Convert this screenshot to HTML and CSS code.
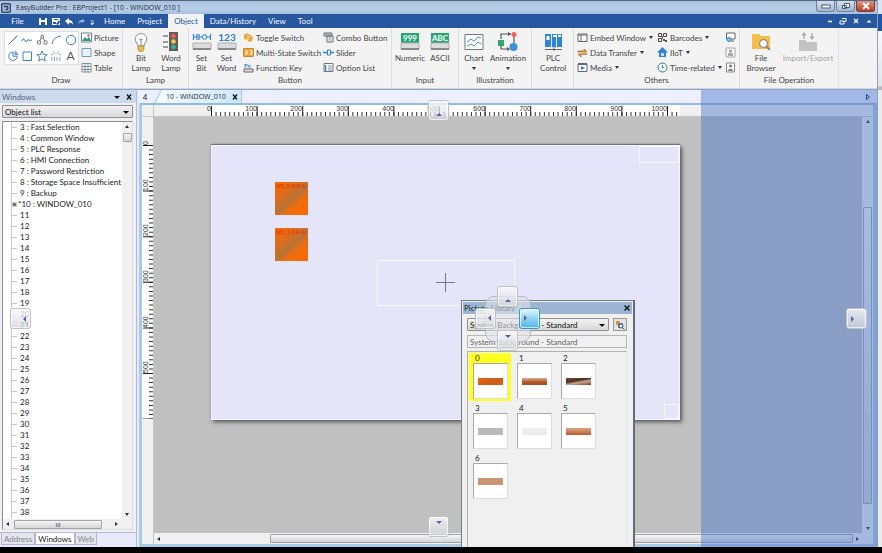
FILE: index.html
```html
<!DOCTYPE html>
<html lang="en">
<head>
<meta charset="utf-8">
<title>EasyBuilder Pro</title>
<link rel="stylesheet" href="styles.css">
</head>
<body>
<div class="desktop">
<div class="app">
  <header class="titlebar">
    <svg class="app-logo" width="12" height="12" viewBox="0 0 12 12"><rect x="1" y="1" width="10" height="10" rx="2" fill="#2c4478"/><path d="M3 3h6v6H3z" fill="none" stroke="#dce6f4"/><path d="M3 6h4M5 9V6" stroke="#dce6f4"/></svg>
    <span class="title">EasyBuilder Pro : EBProject1 - [10 - WINDOW_010 ]</span>
    <div class="win-buttons">
      <button aria-label="Minimize"><svg width="10" height="6"><rect x="1" y="2" width="8" height="3" fill="#fff" stroke="#4a5b73"/></svg></button>
      <button aria-label="Restore"><svg width="10" height="8"><path d="M3.500 1.500h5v4h-5zM1.500 3.500h4v3h-4z" fill="#fff" stroke="#4a5b73"/></svg></button>
      <button class="close" aria-label="Close"><svg width="10" height="8"><path d="M2 1l6 6M8 1L2 7" stroke="#fff" stroke-width="2"/></svg></button>
    </div>
  </header>

  <nav class="menubar">
    <button class="file">File</button>
    <div class="quick">
      <button aria-label="Save"><svg width="10" height="9"><path d="M1 1h8v7H1z" fill="#fff"/><path d="M3 1h4v2H3zM3 5h4v3H3z" fill="#27579e"/></svg></button>
      <button aria-label="Save as"><svg width="10" height="9"><path d="M1 1h8v7H1z" fill="#fff"/><path d="M3 2h4v1H3zM2 5h3v2H2zM5 7l3-4 1 2-2 3z" fill="#27579e"/></svg></button>
      <button aria-label="Undo"><svg width="10" height="9"><path d="M1 4l4-3v2q4 0 4 5q-1-3-4-2v2z" fill="#fff"/></svg></button>
      <button aria-label="Redo"><svg width="10" height="9"><path d="M8 4L5 2v1q-3 0-4 4q1-2 4-2v1z" fill="#9db7dc"/></svg></button>
      <button aria-label="More"><svg width="5" height="9"><path d="M0 4h4M1 6h3L2 8z" stroke="#dce6f6" fill="#dce6f6" stroke-width=".7"/></svg></button>
    </div>
    <button class="tab">Home</button>
    <button class="tab">Project</button>
    <button class="tab active">Object</button>
    <button class="tab">Data/History</button>
    <button class="tab">View</button>
    <button class="tab">Tool</button>
    <div class="mdi">
      <button aria-label="Minimize window"><svg width="8" height="8"><path d="M2 4.500h4" stroke="#fff" stroke-width="1.500"/></svg></button>
      <button aria-label="Restore window"><svg width="8" height="8"><path d="M3 1.500h4v3H5.500M1 4h4v3H1z" stroke="#fff" fill="none"/></svg></button>
      <button aria-label="Close window"><svg width="8" height="8"><path d="M2 2l4 4M6 2L2 6" stroke="#fff" stroke-width="1.300"/></svg></button>
      <button aria-label="Collapse ribbon"><svg width="8" height="8"><path d="M1.500 5.500h5L4 3z" fill="#fff"/></svg></button>
    </div>
  </nav>

  <section class="ribbon">
    <div class="group draw">
      <div class="tools">
        <div class="palette">
          <button aria-label="Line"><svg width="12" height="12"><path d="M1.500 10.500l9-9" stroke="#3f6fae" fill="none"/></svg></button>
          <button aria-label="Freehand"><svg width="12" height="12"><path d="M1 7q1-4 2.500-1T6 7t2-1 3 0" stroke="#3f6fae" fill="none"/></svg></button>
          <button aria-label="Polyline"><svg width="12" height="12"><path d="M3 8l3-5 4 5" stroke="#667" fill="none"/><path d="M1.500 7h3v3h-3zM5 1.500h2.500V4H5zM8 7h3v3H8z" stroke="#667" fill="#fff" stroke-width=".8"/></svg></button>
          <button aria-label="Arc"><svg width="12" height="12"><path d="M2 10q1-7 9-8" stroke="#3f7fc0" fill="none"/></svg></button>
          <button aria-label="Ellipse"><svg width="12" height="12"><circle cx="6" cy="6" r="4.700" stroke="#3f7fc0" fill="none"/></svg></button>
          <button aria-label="Pie"><svg width="12" height="12"><path d="M6 2a4.200 4.200 0 1 0 4.200 4.200H6zM8 4.500h2.500A3 3 0 0 0 8 1.700z" stroke="#3f7fc0" fill="none"/></svg></button>
          <button aria-label="Rectangle"><svg width="12" height="12"><path d="M2 2h8.500v8.500H2z" stroke="#3f7fc0" fill="none"/></svg></button>
          <button aria-label="Star"><svg width="12" height="12"><path d="M6 1l1.500 3.500 3.700.3-2.900 2.400 1 3.700L6 9 2.700 10.900l1-3.700L.8 4.800l3.700-.3z" stroke="#3f7fc0" fill="none"/></svg></button>
          <button aria-label="Scale"><svg width="12" height="12"><path d="M2 11V7M4.500 11V7M7 11V7M10 11V7M1 4l2 1M3.500 1.500L5 4M8.500 1.500L7 4M11 4L9 5" stroke="#8d9fb5" fill="none"/></svg></button>
          <button class="letter" aria-label="Text">A</button>
        </div>
        <div class="stack">
          <button class="small"><svg width="11" height="11"><path d="M.5 1h10v9H.5z" fill="#fff" stroke="#6f8799"/><path d="M1 9l3-4 2 2 2-2 2 4z" fill="#2f9d72"/><circle cx="7.500" cy="3.500" r="1.200" fill="#e8603c"/></svg>Picture</button>
          <button class="small"><svg width="11" height="11"><path d="M1 1.500h9v8H1z" fill="#e7f3f8" stroke="#6f9fb4"/></svg>Shape</button>
          <button class="small"><svg width="11" height="11"><path d="M1 1.500h9v8.500H1zM4 1v9M7 1v9M1 4.500h9M1 7.500h9" fill="#fff" stroke="#667a8c" stroke-width=".8"/></svg>Table</button>
        </div>
      </div>
      <div class="caption">Draw</div>
    </div>

    <div class="group lamp">
      <div class="tools">
        <button class="big"><svg width="20" height="20"><path d="M7 14q0-2-2-4a5.700 5.700 0 1 1 10 0q-2 2-2 4z" fill="#fff" stroke="#888"/><path d="M8 7l2 1 2-1M10 8v6" stroke="#666" fill="none" stroke-width=".8"/><path d="M7 14h6v4l-1.500 1.500h-3L7 18z" fill="#e9bd55" stroke="#9a834f" stroke-width=".7"/></svg>Bit<br>Lamp</button>
        <button class="big"><svg width="20" height="20"><path d="M2 4h5M2 10h5M2 15h5" stroke="#444"/><path d="M8 0h9v19H8z" fill="#5d5d60"/><circle cx="12.500" cy="4" r="2.300" fill="#f2604a"/><circle cx="12.500" cy="9.500" r="2.300" fill="#f5c64b"/><circle cx="12.500" cy="15" r="2.300" fill="#38b88a"/></svg>Word<br>Lamp</button>
      </div>
      <div class="caption">Lamp</div>
    </div>

    <div class="group button-group">
      <div class="tools">
        <button class="big slim"><svg width="20" height="20"><path d="M1.500 2v6M1 5h4M5 2v6M7 2v6M7 5h3M15 5h3M18.500 2v6" stroke="#2f80d0" fill="none" stroke-width="1.200"/><circle cx="12.500" cy="5" r="2.300" fill="none" stroke="#2f80d0"/><path d="M1 11h18v6H1z" fill="#dcdcdc" stroke="#b0b0b0"/><path d="M1 16h18v2H1z" fill="#888"/></svg>Set<br>Bit</button>
        <button class="big slim"><svg width="20" height="20"><text x="10" y="9" text-anchor="middle" class="num123">123</text><path d="M1 11h18v6H1z" fill="#dcdcdc" stroke="#b0b0b0"/><path d="M1 16h18v2H1z" fill="#888"/></svg>Set<br>Word</button>
        <div class="stack switches">
          <button class="small"><svg width="11" height="11"><path d="M1 3l3-2 3 2 3 2-1 4-3 1-2-2-3-1z" fill="#eaa637"/><path d="M4 3l3 3M3 6l3 2" stroke="#fff1cf"/></svg>Toggle Switch</button>
          <button class="small"><svg width="11" height="11"><path d="M.5 1.500h10v8H.5z" fill="#eaa637" stroke="#c98a2b"/><path d="M2 4h2v3H2M7 4h2v3H7" stroke="#fff" fill="none"/></svg>Multi-State Switch</button>
          <button class="small"><svg width="11" height="11"><text x="1" y="6" class="fn">Fn</text><path d="M1 7h9v3H1z" fill="#ddd" stroke="#666"/></svg>Function Key</button>
        </div>
        <div class="stack">
          <button class="small"><svg width="11" height="11"><path d="M1 1h8v3H1zM4 4h6v6H4z" fill="#fff" stroke="#666"/><path d="M1 1h8v2H1z" fill="#8aa4be"/><path d="M5.500 6h3M5.500 8h3" stroke="#788"/></svg>Combo Button</button>
          <button class="small"><svg width="11" height="11"><path d="M0 5.500h4M8 5.500h3" stroke="#2f80d0" stroke-width="1.500"/><path d="M4.500 3h3v5h-3z" fill="#fff" stroke="#2f80d0"/></svg>Slider</button>
          <button class="small"><svg width="11" height="11"><path d="M1 1.500h9v8H1z" fill="#fff" stroke="#678"/><path d="M2.500 3v6" stroke="#4c83bd" stroke-width="1.500"/><path d="M5 4h4M5 6h4M5 8h4" stroke="#678" stroke-width=".8"/></svg>Option List</button>
        </div>
      </div>
      <div class="caption">Button</div>
    </div>

    <div class="group input-group">
      <div class="tools">
        <button class="big"><svg width="20" height="20"><path d="M1 1h18v10H1z" fill="#29a673"/><text x="10" y="9" text-anchor="middle" class="tag">999</text><path d="M1 11h18v6H1z" fill="#dcdcdc" stroke="#b0b0b0"/><path d="M1 16h18v2H1z" fill="#888"/></svg>Numeric</button>
        <button class="big"><svg width="20" height="20"><path d="M1 1h18v10H1z" fill="#29a673"/><text x="10" y="9" text-anchor="middle" class="tag">ABC</text><path d="M1 11h18v6H1z" fill="#dcdcdc" stroke="#b0b0b0"/><path d="M1 16h18v2H1z" fill="#888"/></svg>ASCII</button>
      </div>
      <div class="caption">Input</div>
    </div>

    <div class="group illus">
      <div class="tools">
        <button class="big"><svg width="20" height="20"><path d="M1 2.500h18v15H1z" fill="#fff" stroke="#777"/><path d="M3 10l4-3 3 2 4-4 3 1" stroke="#4d8ecb" fill="none"/><path d="M3 14l4-2 3 2 4-4 3 2" stroke="#4aa787" fill="none"/></svg>Chart<i class="drop"></i></button>
        <button class="big wide"><svg width="20" height="20"><path d="M3 7V2h10M16 5v6M3 13v4h8" stroke="#555" fill="none" stroke-width="1.200"/><path d="M10 0l3 2-3 2zM9 15l3 2-3 2z" fill="#555"/><path d="M0 8h6v6H0z" fill="#31a66f"/><circle cx="16" cy="2.500" r="2.500" fill="#ee6550"/><circle cx="15.500" cy="15" r="4" fill="#3d8edb"/></svg>Animation<i class="drop"></i></button>
      </div>
      <div class="caption">Illustration</div>
    </div>

    <div class="group plc">
      <div class="tools">
        <button class="big wide"><svg width="20" height="20"><path d="M2 2h17v13H2z" fill="#2f84d4"/><path d="M3.500 4h3v4h-3zM10 3h3v2h-3zM15 3h3v2h-3z" fill="#fff"/><path d="M8.500 2v13M13.500 2v13" stroke="#d7e9fa"/><path d="M2 17.500h17M11 15v4" stroke="#666"/></svg>PLC<br>Control</button>
      </div>
    </div>

    <div class="group others">
      <div class="tools">
        <div class="stack embed">
          <button class="small"><svg width="11" height="11"><path d="M1 2h9v7.500H1z" fill="#fff" stroke="#666"/><path d="M1 3h9M4 3v6" stroke="#667"/></svg>Embed Window<i class="drop"></i></button>
          <button class="small"><svg width="11" height="11"><path d="M1 4h6V2l3 3H1zM10 7H4v3L1 7z" fill="#e79a45" stroke="#b97022" stroke-width=".8"/></svg>Data Transfer<i class="drop"></i></button>
          <button class="small"><svg width="11" height="11"><path d="M1 2h9v7.500H1z" fill="#fff" stroke="#667"/><path d="M1 2h9" stroke="#667" stroke-width="2"/><path d="M4 4l4 2-4 2z" fill="#2f84d4"/></svg>Media<i class="drop"></i></button>
        </div>
        <div class="stack codes">
          <button class="small"><svg width="11" height="11"><path d="M1.500 1.500h3v3h-3zM6.500 1.500h3v3h-3zM1.500 6.500h3v3h-3z" stroke="#444" fill="none"/><path d="M6 7h2v1h2v2H8V9H6zM5 4h1v3H5z" fill="#555"/></svg>Barcodes<i class="drop"></i></button>
          <button class="small"><svg width="11" height="11"><path d="M0 5.500L5.500 0 11 5.500H9V10H2V5.500z" fill="#2f84d4"/><path d="M4 6h3v3H4z" fill="#c4e1fa"/></svg>IIoT<i class="drop"></i></button>
          <button class="small"><svg width="11" height="11"><circle cx="5.500" cy="5.500" r="4.500" fill="#fff" stroke="#2b7a98"/><path d="M5.500 3v3l2-1" fill="none" stroke="#3b9b74"/></svg>Time-related<i class="drop"></i></button>
        </div>
        <div class="stack">
          <button class="small" aria-label="Remote view"><svg width="11" height="11"><path d="M1.500 1h8.500v6H1.500z" fill="#fff" stroke="#666"/><circle cx="4" cy="7.500" r="2" fill="#8cc2f0" stroke="#2f84d4"/><path d="M6 9h3" stroke="#666"/></svg></button>
          <button class="small" aria-label="Operator"><svg width="11" height="11"><path d="M1 1h9v9H1z" fill="#f5f5f5" stroke="#aaa"/><circle cx="5.500" cy="4" r="1.500" fill="#999"/><path d="M3 9V6h5v3z" fill="#aaa"/></svg></button>
          <button class="small" aria-label="Contacts"><svg width="11" height="11"><path d="M1.500 1h8v9h-8z" fill="#fff" stroke="#888"/><circle cx="5.500" cy="4" r="1.500" fill="#777"/><path d="M3 8q2.500-3 5 0v1H3z" fill="#888"/></svg></button>
        </div>
      </div>
      <div class="caption">Others</div>
    </div>

    <div class="group fileop">
      <div class="tools">
        <button class="big"><svg width="20" height="20"><path d="M1 2h7l2 2h9v13H1z" fill="#f6bd48"/><circle cx="12.500" cy="11.500" r="4" fill="#fff" stroke="#777"/><path d="M15.500 14.500L19 18" stroke="#777" stroke-width="1.500"/></svg>File<br>Browser</button>
        <button class="big import" disabled><svg width="20" height="20"><path d="M1 8h6l2 2h10v9H1z" fill="#c3c3c3"/><path d="M6 7V2M14 1v5" stroke="#aaa" stroke-width="1.300"/><path d="M3.500 3.500h5L6 0zM11.500 4.500h5L14 8z" fill="#aaa"/></svg>Import/Export</button>
      </div>
      <div class="caption">File Operation</div>
    </div>
  </section>

  <main class="work">
    <aside class="panel">
      <div class="panel-head"><span>Windows</span>
        <button aria-label="Panel menu"><svg width="8" height="8"><path d="M1 3h6L4 6z" fill="#111"/></svg></button>
        <button aria-label="Close panel"><svg width="8" height="8"><path d="M2 1.500l4 5M6 1.500l-4 5" stroke="#111" stroke-width="1.300"/></svg></button>
      </div>
      <div class="panel-body">
        <div class="combo"><select aria-label="Panel view"><option>Object list</option></select></div>
        <div class="tree">
          <ul>
            <li>3 : Fast Selection</li><li>4 : Common Window</li><li>5 : PLC Response</li><li>6 : HMI Connection</li><li>7 : Password Restriction</li><li>8 : Storage Space Insufficient</li><li>9 : Backup</li><li class="open">*10 : WINDOW_010</li>
            <li>11</li><li>12</li><li>13</li><li>14</li><li>15</li><li>16</li><li>17</li><li>18</li><li>19</li><li>20</li><li>21</li><li>22</li><li>23</li><li>24</li><li>25</li><li>26</li><li>27</li><li>28</li><li>29</li><li>30</li><li>31</li><li>32</li><li>33</li><li>34</li><li>35</li><li>36</li><li>37</li><li>38</li><li>39</li>
          </ul>
          <div class="vbar"><i class="arrow up"></i><i class="thumb"></i><i class="arrow down"></i></div>
          <div class="hbar"><i class="arrow left"></i><i class="thumb">III</i><i class="arrow right"></i></div>
        </div>
      </div>
      <div class="panel-tabs"><button>Address</button><button class="active">Windows</button><button>Web</button></div>
    </aside>

    <section class="editor">
      <div class="doc-tabs">
        <button class="prev">4</button>
        <div class="doc-tab"><span>10 - WINDOW_010</span><button aria-label="Close tab"><svg width="8" height="8"><path d="M2 1.500l4 5M6 1.500l-4 5" stroke="#111" stroke-width="1.300"/></svg></button></div>
        <button class="next" aria-label="Next tab"><svg width="6" height="8"><path d="M1.500 1.500v5L4.500 4z" fill="none" stroke="#123"/></svg></button>
      </div>
      <div class="frame">
        <div class="corner"></div>
        <div class="hruler">
          <svg width="480" height="12">
            <path d="M7 0h469v12H7z" fill="#fff"/>
            <path d="M7 9h468" stroke="#333" stroke-width="4" stroke-dasharray="1 3.560"/>
            <path d="M7 6h468" stroke="#222" stroke-width="10" stroke-dasharray="1 44.600"/>
            <g text-anchor="end" class="scale"><text x="7" y="6">0</text><text x="53" y="6">100</text><text x="98" y="6">200</text><text x="144" y="6">300</text><text x="190" y="6">400</text><text x="235" y="6">500</text><text x="281" y="6">600</text><text x="327" y="6">700</text><text x="372" y="6">800</text><text x="418" y="6">900</text><text x="463" y="6">1000</text></g>
          </svg>
        </div>
        <div class="vruler">
          <svg width="12" height="280">
            <path d="M0 5h12v275H0z" fill="#fff"/>
            <path d="M9 5v274" stroke="#333" stroke-width="4" stroke-dasharray="1 3.560"/>
            <path d="M6 5v274" stroke="#222" stroke-width="10" stroke-dasharray="1 44.600"/>
            <g class="scale"><text transform="translate(6 5) rotate(-90)">0</text><text transform="translate(6 51) rotate(-90)">100</text><text transform="translate(6 96) rotate(-90)">200</text><text transform="translate(6 142) rotate(-90)">300</text><text transform="translate(6 188) rotate(-90)">400</text><text transform="translate(6 233) rotate(-90)">500</text></g>
          </svg>
        </div>
        <div class="stage">
          <div class="hmi">
            <div class="part first">WC_0 (LW-0)</div>
            <div class="part second">WC_1 (LW-0)</div>
            <div class="outline mid"></div>
            <div class="outline top"></div>
            <div class="outline bottom"></div>
            <svg class="cross" width="19" height="19"><path d="M9.500 0v19M0 9.500h19" stroke="#77778a"/></svg>
          </div>
        </div>
        <div class="vbar"><i class="arrow up"></i><i class="thumb"></i><i class="arrow down"></i></div>
        <div class="hbar"><i class="arrow left"></i><i class="thumb"></i><i class="arrow right"></i></div>
      </div>

      <div class="dialog">
        <div class="dialog-head"><span>Picture Library</span><button aria-label="Close dialog"><svg width="8" height="8"><path d="M1.500 1.500l5 5M6.500 1.500l-5 5" stroke="#111" stroke-width="1.300"/></svg></button></div>
        <div class="pick">
          <div class="combo"><select aria-label="Library"><option>System Background - Standard</option></select></div>
          <button aria-label="Browse library"><svg width="10" height="10"><path d="M1 1h4v4H1z" fill="#ef8c3a"/><path d="M3 3h5v5H3z" fill="#5b8ed0"/><circle cx="6" cy="6" r="2" fill="#fff" stroke="#345"/><path d="M7.500 7.500l2 2" stroke="#345"/></svg></button>
        </div>
        <input type="text" aria-label="Library name" value="System Background - Standard" readonly>
        <div class="gallery">
          <button class="cell selected">0<span class="tile"><i class="bar orange"></i></span></button>
          <button class="cell">1<span class="tile"><i class="bar copper"></i></span></button>
          <button class="cell">2<span class="tile"><i class="bar dark"></i></span></button>
          <button class="cell">3<span class="tile"><i class="bar gray"></i></span></button>
          <button class="cell">4<span class="tile"><i class="bar pale"></i></span></button>
          <button class="cell">5<span class="tile"><i class="bar salmon"></i></span></button>
          <button class="cell">6<span class="tile"><i class="bar tan"></i></span></button>
        </div>
      </div>

      <div class="drop-zone"></div>
      <div class="compass">
        <i class="dock n"></i><i class="dock w"></i><i class="dock e hot"></i><i class="dock s"></i>
      </div>
    </section>

    <div class="edge-docks"><i class="dock n"></i><i class="dock w"></i><i class="dock e"></i><i class="dock s"></i></div>
  </main>
</div>
<div class="behind"><div class="behind-title"></div><div class="behind-ribbon"></div></div>
</div>
</body>
</html>
```
FILE: styles.css
```css
* { box-sizing: border-box; }

body {
  margin: 0;
  height: 100vh;
  padding-bottom: 6px;
  overflow: hidden;
  background: #000;
  font: 8px/10px Lato, "Open Sans", sans-serif;
  color: #444;
}

button {
  border: 0;
  margin: 0;
  padding: 0;
  background: none;
  font: inherit;
  color: inherit;
}

svg { display: block; flex: none; }

.desktop { display: flex; height: 100%; }
.app { flex: 1; min-width: 0; display: flex; flex-direction: column; }
.behind { width: 5px; background: #e9ebee; border-left: 1px solid #8fa0b5; }
.behind-title { height: 14px; background: #d9e5f5; }
.behind-ribbon { height: 76px; background: linear-gradient(#1d56ab 17px, #f6f8fb 17px, #dfe5ed 72px, #b4b8bf 73px); }

/* title and menu */
.titlebar {
  display: flex;
  align-items: center;
  gap: 4px;
  height: 14px;
  padding: 0 2px 0 0;
  border-top: 1px solid #51677f;
  background: linear-gradient(#a9c1de, #b9cfe9 60%, #a6bfdd);
}
.title, .doc-tab { font: 7px/12px "Open Sans", sans-serif; color: #222c3b; white-space: nowrap; }
.win-buttons { display: flex; gap: 1px; margin-left: auto; align-self: flex-start; }
.win-buttons button {
  display: grid;
  place-items: center;
  width: 19px;
  height: 11px;
  border: 1px solid #70839c;
  border-top: 0;
  border-radius: 0 0 3px 3px;
  background: linear-gradient(#d3dfed, #a3b7d0);
}
.win-buttons .close { background: linear-gradient(#dd9583, #c23a22); border-color: #783c38; }

.menubar { display: flex; height: 14px; background: #27579e; color: #f3f7fd; line-height: 13px; }
.file { width: 35px; }
.quick { display: flex; align-items: center; gap: 3px; width: 63px; padding-left: 3px; }
.tab { padding: 0 6px; }
.tab.active { background: #f3f4f6; color: #27579e; }
.mdi { display: flex; align-items: center; gap: 5px; margin-left: auto; padding-right: 4px; }

/* ribbon */
.ribbon {
  display: grid;
  grid-template-columns: 123px 66px 203px 67px 73px 42px 166px 99px;
  height: 61px;
  background: #f3f3f4;
  border-bottom: 1px solid #cfd4dc;
}
.group { display: flex; flex-direction: column; padding-top: 2px; border-right: 1px solid #dedfe2; white-space: nowrap; }
.tools { display: flex; height: 45px; padding-left: 3px; }
.caption { text-align: center; line-height: 10px; }
.palette {
  display: grid;
  grid-template-columns: repeat(5, 14px);
  align-content: space-evenly;
  justify-content: space-evenly;
  width: 75px;
  height: 34px;
  margin: 1px 2px 0 1px;
  border: 1px solid #dadde2;
  background: #fff;
}
.palette button { display: grid; place-items: center; height: 14px; }
.letter { font-size: 12px; color: #555; }
.stack { display: flex; flex-direction: column; }
.small { display: flex; align-items: center; gap: 2px; height: 15px; }
.small .drop { margin-left: 1px; }
.big { display: flex; flex-direction: column; align-items: center; width: 30px; padding-top: 2px; text-align: center; }
.big svg { margin-bottom: 1px; }
.big.slim { width: 25px; }
.big.wide { width: 38px; }
.drop { border: 2px solid transparent; border-top: 3px solid #333; border-bottom: 0; }
.big .drop { margin-top: 4px; }
.button-group .tools, .illus .tools { padding-left: 0; }
.plc .tools { padding-left: 2px; }
.switches { width: 80px; margin-left: 4px; }
.embed { width: 80px; }
.codes { width: 68px; }
.fileop .big { width: 36px; }
.fileop .import { width: 58px; color: #a5a5a8; }
.num123 { font: 700 10px Lato, sans-serif; fill: #2f80d0; }
.fn { font: 700 6px Lato, sans-serif; fill: #2f80d0; }
.tag { font: 700 8px Lato, sans-serif; fill: #fff; }

/* work area */
.work { position: relative; flex: 1; min-height: 0; display: flex; border-top: 1px solid #8ba8cc; background: #e8eafa; }
.panel { display: flex; flex-direction: column; width: 137px; border-right: 1px solid #b3b8dc; }
.panel-head { display: flex; align-items: center; gap: 4px; height: 13px; padding: 0 3px 0 2px; background: #ccdaee; color: #55657c; }
.panel-head span { flex: 1; }
.panel-body { flex: 1; min-height: 0; display: flex; flex-direction: column; gap: 3px; padding: 2px 3px 2px 2px; background: #f0f0f2; border-bottom: 1px solid #b3b8dc; }
.combo { position: relative; flex: 1; }
.combo::after { content: ""; position: absolute; right: 4px; top: 6px; border: 3px solid transparent; border-top-color: #111; border-bottom: 0; pointer-events: none; }
.panel-body .combo { flex: none; }
select {
  display: block;
  appearance: none;
  width: 100%;
  height: 13px;
  padding: 0 2px;
  border: 1px solid #8e9094;
  border-radius: 1px;
  background: linear-gradient(#f2f2f2, #d8d8d8);
  font: inherit;
  color: #111;
}
.tree {
  flex: 1;
  min-height: 0;
  display: grid;
  grid-template: minmax(0, 1fr) 10px / minmax(0, 1fr) 10px;
  border: 1px solid #8a8d92;
  border-right-color: #dedede;
  border-bottom-color: #dedede;
  background: #fff;
}
.tree ul { margin: 0 0 0 8px; padding: 0; overflow: hidden; list-style: none; border-left: 1px solid #c9c9c9; color: #222; }
.tree li { height: 11px; padding-left: 8px; line-height: 11px; white-space: nowrap; background: linear-gradient(#c9c9c9, #c9c9c9) 0 5px / 5px 1px no-repeat; }
.tree .open { padding-left: 6px; background: radial-gradient(#666 1px, #ccc 2px) 0 3px / 5px 5px no-repeat; }

.vbar, .hbar { display: flex; align-items: center; background: #f0f0f1; }
.vbar { flex-direction: column; padding: 3px 0; }
.hbar { padding: 0 3px; }
.arrow { border: 2px solid transparent; }
.arrow.up { border-bottom: 3px solid #333; border-top: 0; }
.arrow.down { border-top: 3px solid #333; border-bottom: 0; margin-top: auto; }
.arrow.left { border-right: 3px solid #333; border-left: 0; }
.arrow.right { border-left: 3px solid #333; border-right: 0; margin-left: auto; }
.thumb { border: 1px solid #a3a5a9; border-radius: 1px; background: linear-gradient(#f6f6f6, #d4d4d6); }
.tree .vbar .thumb { width: 9px; height: 9px; margin-top: 5px; }
.tree .hbar { grid-column: 1 / 3; padding-right: 14px; }
.tree .hbar .thumb { width: 88px; height: 9px; margin-left: 5px; font: 6px/7px Lato, sans-serif; text-align: center; color: #444; }
.panel-tabs { display: flex; height: 14px; padding-left: 1px; }
.panel-tabs button { height: 12px; padding: 0 2px; border: 1px solid #b3b6c6; border-top: 0; background: #e4e4ec; color: #85868c; }
.panel-tabs .active { background: #fff; color: #222; }

/* editor */
.editor { position: relative; flex: 1; min-width: 0; margin-left: 2px; display: flex; flex-direction: column; overflow: hidden; }
.doc-tabs { display: flex; height: 13px; background: #eeeffd; color: #222; }
.prev { width: 12px; }
.doc-tab { display: flex; align-items: center; gap: 5px; padding: 0 2px 0 15px; margin-right: auto; border-right: 1px solid #a9c6e0; background: linear-gradient(118deg, #eeeffd 8px, #b9d4ea 9px, #f4faff 11px, #cde6f8); }
.next { width: 12px; }
.frame {
  flex: 1;
  min-height: 0;
  display: grid;
  grid-template: 12px minmax(0, 1fr) 11px / 12px minmax(0, 1fr) 11px;
  border: 3px solid #a9cbe6;
  border-top: 2px solid #92bbdc;
  border-right-width: 4px;
  background: #f0f0f1;
}
.corner { border-right: 1px solid #c6c6c8; border-bottom: 1px solid #c6c6c8; }
.hruler { grid-column: 2 / 4; padding-left: 50px; overflow: hidden; border-bottom: 1px solid #c6c6c8; }
.vruler { grid-row: 2 / 4; padding-top: 23px; overflow: hidden; border-right: 1px solid #c6c6c8; }
.scale { font: 7px "Liberation Sans", sans-serif; fill: #333; }
.stage { overflow: hidden; padding: 28px 0 0 57px; background: #c0c0c0; }
.hmi { position: relative; width: 469px; height: 275px; background: #e5e5fa; border: 1px solid #f5f5ff; box-shadow: 2px 2px 4px #555, 0 -1px 1px #777; }
.part {
  position: absolute;
  left: 63px;
  width: 33px;
  height: 33px;
  padding: 1px;
  background: linear-gradient(140deg, #f56a08 10%, #d86d20 35%, #b87335 52%, #f06c0e 68%, #ff6900);
  font: 5px/7px "Liberation Sans", sans-serif;
  color: #d9290a;
  white-space: nowrap;
}
.part.first { top: 36px; }
.part.second { top: 82px; }
.outline { position: absolute; border: 1px solid #f7f7ff; }
.outline.mid { left: 165px; top: 114px; width: 138px; height: 46px; }
.outline.top { right: 0; top: 0; width: 40px; height: 17px; }
.outline.bottom { right: 0; bottom: 0; width: 15px; height: 15px; }
.cross { position: absolute; left: 224px; top: 127px; }
.frame .vbar .thumb { width: 9px; height: 297px; margin-top: 84px; }
.frame .hbar { grid-column: 2 / 4; padding-right: 14px; }
.frame .hbar .thumb { flex: 1; height: 9px; margin: 0 3px 0 110px; }

/* floating library dialog */
.dialog {
  position: absolute;
  left: 322px;
  top: 210px;
  bottom: -1px;
  width: 174px;
  padding: 1px 6px 0 5px;
  border: 1px solid #777c84;
  border-right: 2px solid #666b72;
  background: #f0f0f0;
  color: #222;
}
.dialog-head { display: flex; align-items: center; justify-content: space-between; height: 12px; margin: 0 -5px 4px -4px; padding: 0 1px; background: #9bb5d3; color: #101c30; }
.pick { display: flex; gap: 4px; margin-bottom: 4px; }
.pick button { display: grid; place-items: center; width: 14px; height: 13px; border: 1px solid #999; background: #e4e4e4; }
.dialog input { display: block; width: 100%; height: 13px; padding: 0 2px; border: 1px solid #b5b5b5; background: #f0f0f0; font: inherit; color: #666; }
.gallery { display: grid; grid-template-columns: repeat(3, 44px); grid-auto-rows: 50px; height: 200px; margin-top: 3px; border: 1px solid #b0b0b0; border-right-color: #e2e2e2; }
.cell { display: flex; flex-direction: column; padding: 0 4px; text-align: left; text-indent: 2px; line-height: 10px; border: 1px solid #f0f0f0; }
.cell.selected { background: #ffff20; }
.tile { display: grid; place-items: center; width: 35px; height: 36px; border: 1px solid #aaa; border-right-color: #ddd; border-bottom-color: #ddd; background: #fff; }
.bar { width: 25px; height: 7px; }
.orange { background: linear-gradient(150deg, #ec6410, #c75d1c 60%, #e0600c); }
.copper { background: linear-gradient(#d9b09a, #b05422 60%, #a65225); }
.dark { background: linear-gradient(170deg, #70452f, #54301e 40%, #c4a798 60%, #7e3b17); }
.gray { background: #bababa; }
.pale { background: #ededed; }
.salmon { background: linear-gradient(#dda284, #c67b54 60%, #b35a2c); }
.tan { background: #ca956f; }

/* docking guides */
.drop-zone { position: absolute; top: 0; right: 0; bottom: 0; width: 176px; background: rgba(69, 112, 203, .44); }
.dock { display: grid; place-items: center; width: 21px; height: 21px; border: 1px solid #bfc1c5; outline: 1px solid rgba(255, 255, 255, .7); outline-offset: -2px; border-radius: 3px; background: linear-gradient(rgba(250, 250, 252, .82), rgba(212, 213, 218, .72)); }
.dock::after { content: ""; border: 3px solid transparent; }
.dock.n { grid-area: 1 / 2; }
.dock.w { grid-area: 2 / 1; }
.dock.e { grid-area: 2 / 3; }
.dock.s { grid-area: 3 / 2; }
.dock.n::after { border-bottom-color: #5a5faa; border-top: 0; margin-top: 8px; }
.dock.s::after { border-top-color: #5a5faa; border-bottom: 0; margin-bottom: 8px; }
.dock.w::after { border-right-color: #5a5faa; border-left: 0; margin-left: 8px; }
.dock.e::after { border-left-color: #5a5faa; border-right: 0; margin-right: 8px; }
.dock.hot { border-color: #3399c9; background: linear-gradient(#e2f5fe, #91d4f4 50%, #50b4e8); }
.compass { position: absolute; top: 50%; left: 50%; display: grid; grid-template: repeat(3, 22px) / repeat(3, 22px); transform: translate(-50%, -50%); }
.compass::before { content: ""; grid-area: 1 / 1 / 4 / 4; margin: 10px; border: 1px solid #b9bac4; border-radius: 9px; background: rgba(225, 226, 233, .6); }
.edge-docks { position: absolute; inset: 10px; display: grid; grid-template: 21px 1fr 21px / 21px 1fr 21px; place-items: center; pointer-events: none; }
```
